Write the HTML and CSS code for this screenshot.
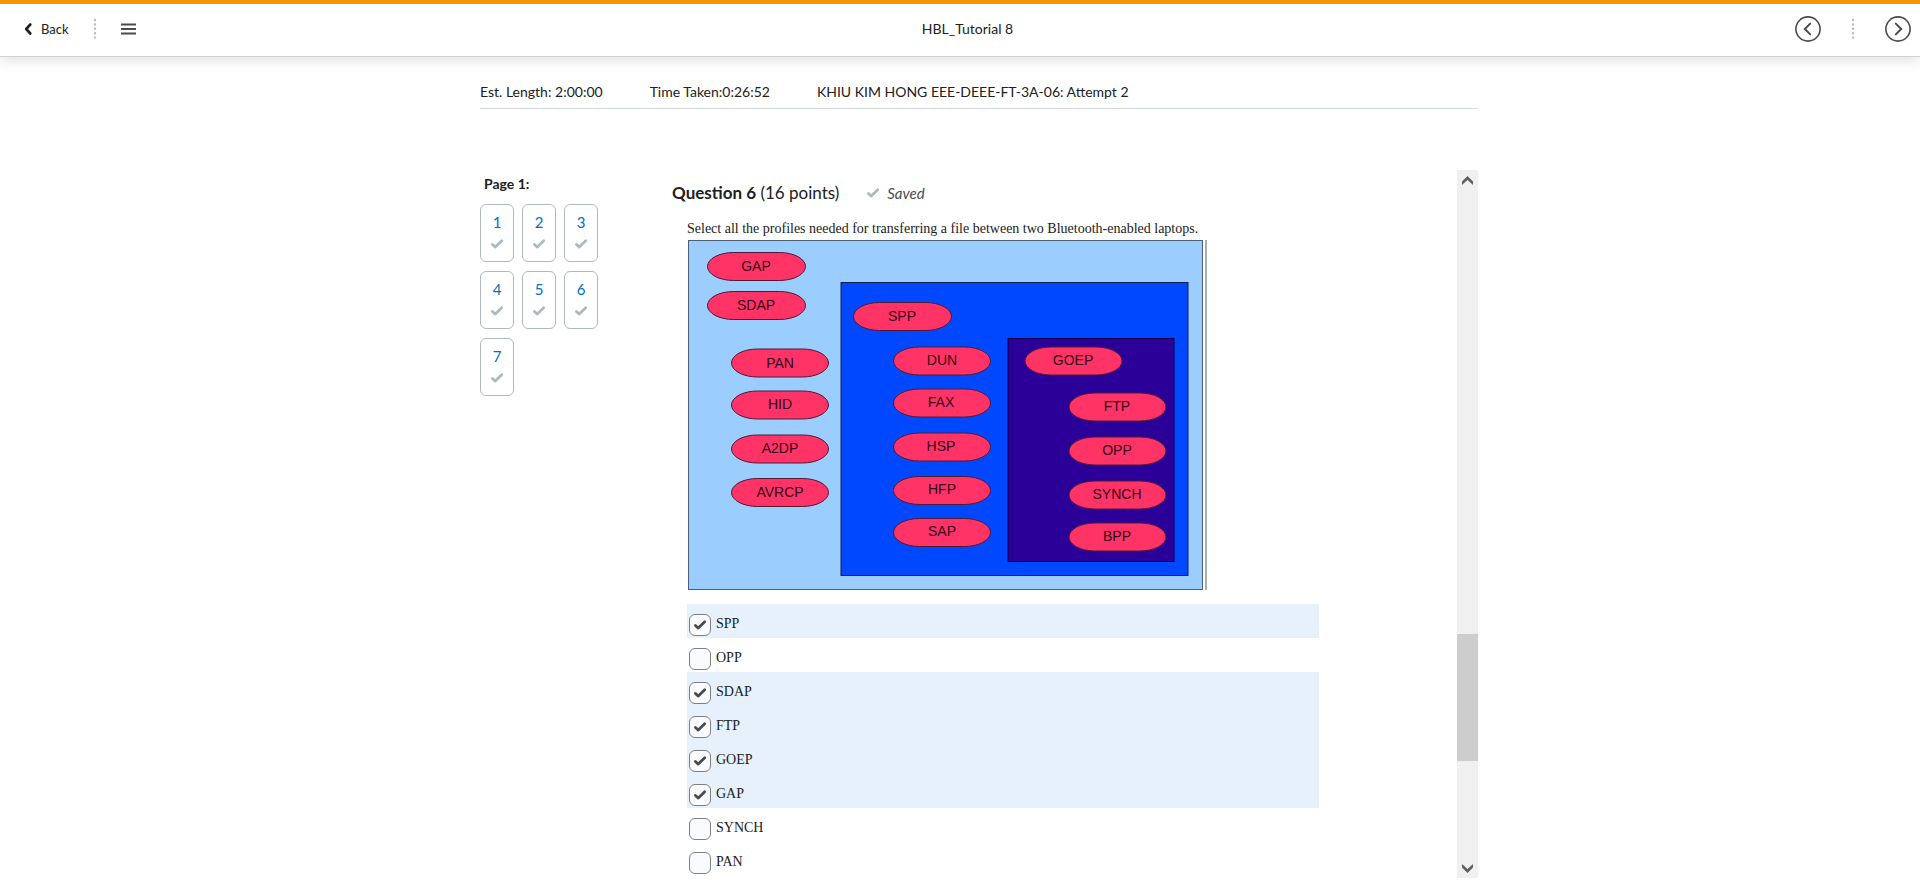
FILE: index.html
```
<!DOCTYPE html>
<html lang="en">
<head>
<meta charset="utf-8">
<title>HBL_Tutorial 8</title>
<link rel="stylesheet" href="styles.css">
</head>
<body>
<svg class="defs" aria-hidden="true">
  <symbol id="check" viewBox="0 0 14 12"><path d="M2.4 6.5 5.3 9.1 11.7 2.8" fill="none" stroke="currentColor" stroke-width="2.8" stroke-linecap="round" stroke-linejoin="round"/></symbol>
  <symbol id="dots" viewBox="0 0 4 22"><path d="M2 2v18" fill="none" stroke="#b4bcc3" stroke-width="2.4" stroke-linecap="round" stroke-dasharray="0 4.4"/></symbol>
</svg>

<header class="topbar">
  <div class="tools">
    <button class="back" type="button">
      <svg width="8" height="12" viewBox="0 0 8 12"><path d="M6.3 1.500 2.200 6l4.100 4.500" fill="none" stroke="currentColor" stroke-width="2.6" stroke-linecap="round" stroke-linejoin="round"/></svg>
      Back
    </button>
    <svg class="dots" width="4" height="22"><use href="#dots"/></svg>
    <button class="menu" type="button" aria-label="Menu">
      <svg width="16" height="12" viewBox="0 0 16 12"><path d="M0 1.500h15M0 6h15M0 10.500h15" stroke="#494c4e" stroke-width="1.8"/></svg>
    </button>
  </div>
  <h1 class="title">HBL_Tutorial 8</h1>
  <div class="pager">
    <button type="button" aria-label="Previous">
      <svg width="26" height="26" viewBox="0 0 26 26" fill="none" stroke="#494c4e" stroke-width="1.6"><circle cx="13" cy="13" r="12.1"/><path d="M15.2 7.600 9.800 13l5.400 5.400" stroke-width="2" stroke-linecap="round"/></svg>
    </button>
    <svg class="dots" width="4" height="22"><use href="#dots"/></svg>
    <button type="button" aria-label="Next">
      <svg width="26" height="26" viewBox="0 0 26 26" fill="none" stroke="#494c4e" stroke-width="1.6"><circle cx="13" cy="13" r="12.1"/><path d="m10.8 7.600 5.400 5.400-5.400 5.400" stroke-width="2" stroke-linecap="round"/></svg>
    </button>
  </div>
</header>

<main class="page">
  <div class="info">
    <span>Est. Length: 2:00:00</span>
    <span>Time Taken:0:26:52</span>
    <span>KHIU KIM HONG EEE-DEEE-FT-3A-06: Attempt 2</span>
  </div>

  <div class="quiz">
    <nav class="questions">
      <h2>Page 1:</h2>
      <div class="tiles">
        <a class="tile" href="#q1">1<svg width="14" height="12"><use href="#check"/></svg></a>
        <a class="tile" href="#q2">2<svg width="14" height="12"><use href="#check"/></svg></a>
        <a class="tile" href="#q3">3<svg width="14" height="12"><use href="#check"/></svg></a>
        <a class="tile" href="#q4">4<svg width="14" height="12"><use href="#check"/></svg></a>
        <a class="tile" href="#q5">5<svg width="14" height="12"><use href="#check"/></svg></a>
        <a class="tile" href="#q6">6<svg width="14" height="12"><use href="#check"/></svg></a>
        <a class="tile" href="#q7">7<svg width="14" height="12"><use href="#check"/></svg></a>
      </div>
    </nav>

    <section class="question" id="q6">
      <div class="heading">
        <h2><b>Question 6</b> (16 points)</h2>
        <span class="saved"><svg width="14" height="12"><use href="#check"/></svg><i>Saved</i></span>
      </div>
      <div class="content">
        <p class="prompt">Select all the profiles needed for transferring a file between two Bluetooth-enabled laptops.</p>
        <svg class="diagram" width="520" height="351" viewBox="0 0 520 351" role="img" aria-label="Bluetooth profiles">
          <rect class="outer" x="1.5" y=".5" width="514" height="349"/>
          <path class="edge" d="M519 0v350"/>
          <rect class="serial" x="154" y="42.500" width="347" height="293"/>
          <rect class="object" x="321" y="98.500" width="166" height="223"/>
          <g class="pills">
            <rect x="20.500" y="12.500" width="98" height="28" rx="26" ry="14"/>
            <rect x="20.500" y="51.500" width="98" height="28" rx="26" ry="14"/>
            <rect x="44.500" y="109" width="97" height="28" rx="26" ry="14"/>
            <rect x="44.500" y="151" width="97" height="28" rx="26" ry="14"/>
            <rect x="44.500" y="195" width="97" height="28" rx="26" ry="14"/>
            <rect x="44.500" y="238.500" width="97" height="28" rx="26" ry="14"/>
            <rect x="166.500" y="62.500" width="98" height="28" rx="26" ry="14"/>
            <rect x="206.500" y="107" width="97" height="28" rx="26" ry="14"/>
            <rect x="206.500" y="149" width="97" height="28" rx="26" ry="14"/>
            <rect x="206.500" y="193" width="97" height="28" rx="26" ry="14"/>
            <rect x="206.500" y="236.500" width="97" height="28" rx="26" ry="14"/>
            <rect x="206.500" y="278.500" width="97" height="28" rx="26" ry="14"/>
            <rect x="338" y="107" width="97" height="28" rx="26" ry="14"/>
            <rect x="382" y="153" width="97" height="28" rx="26" ry="14"/>
            <rect x="382" y="197" width="97" height="28" rx="26" ry="14"/>
            <rect x="382" y="241" width="97" height="28" rx="26" ry="14"/>
            <rect x="382" y="283" width="97" height="28" rx="26" ry="14"/>
          </g>
          <g class="names">
            <text x="69" y="31">GAP</text>
            <text x="69" y="70">SDAP</text>
            <text x="93" y="128">PAN</text>
            <text x="93" y="169">HID</text>
            <text x="93" y="213">A2DP</text>
            <text x="93" y="257">AVRCP</text>
            <text x="215" y="81">SPP</text>
            <text x="255" y="125">DUN</text>
            <text x="254" y="167">FAX</text>
            <text x="254" y="211">HSP</text>
            <text x="255" y="254">HFP</text>
            <text x="255" y="296">SAP</text>
            <text x="386" y="125">GOEP</text>
            <text x="430" y="171">FTP</text>
            <text x="430" y="215">OPP</text>
            <text x="430" y="259">SYNCH</text>
            <text x="430" y="301">BPP</text>
          </g>
        </svg>
        <div class="options">
          <label class="option"><input type="checkbox" checked><svg width="14" height="12"><use href="#check"/></svg><span>SPP</span></label>
          <label class="option"><input type="checkbox"><svg width="14" height="12"><use href="#check"/></svg><span>OPP</span></label>
          <label class="option"><input type="checkbox" checked><svg width="14" height="12"><use href="#check"/></svg><span>SDAP</span></label>
          <label class="option"><input type="checkbox" checked><svg width="14" height="12"><use href="#check"/></svg><span>FTP</span></label>
          <label class="option"><input type="checkbox" checked><svg width="14" height="12"><use href="#check"/></svg><span>GOEP</span></label>
          <label class="option"><input type="checkbox" checked><svg width="14" height="12"><use href="#check"/></svg><span>GAP</span></label>
          <label class="option"><input type="checkbox"><svg width="14" height="12"><use href="#check"/></svg><span>SYNCH</span></label>
          <label class="option"><input type="checkbox"><svg width="14" height="12"><use href="#check"/></svg><span>PAN</span></label>
        </div>
      </div>
    </section>

    <div class="scrollbar">
      <button type="button" aria-label="Scroll up"><svg width="11" height="9" viewBox="0 0 11 9"><path d="M0 5.500 5.500 0 11 5.500V9L5.500 4 0 9z" fill="#606060"/></svg></button>
      <div class="track"><div class="thumb"></div></div>
      <button type="button" aria-label="Scroll down"><svg width="11" height="9" viewBox="0 0 11 9"><path d="M0 3.500 5.500 9 11 3.500V0L5.500 5 0 0z" fill="#606060"/></svg></button>
    </div>
  </div>
</main>
</body>
</html>
```
FILE: styles.css
```
* { box-sizing: border-box; }

body {
  margin: 0;
  min-height: 100vh;
  display: flex;
  flex-direction: column;
  background: #fff;
  color: #202122;
  font: 14px/20px Lato, sans-serif;
}

h1, h2, p { margin: 0; font-weight: 400; }

button {
  display: flex;
  align-items: center;
  padding: 0;
  border: 0;
  background: none;
  color: inherit;
  font: inherit;
}

.defs { position: absolute; width: 0; height: 0; }

.topbar {
  display: grid;
  grid-template-columns: 1fr auto 1fr;
  align-items: center;
  height: 57px;
  padding: 0 9px 3px 24px;
  border-top: 4px solid #f59300;
  border-bottom: 1px solid #d3d3d3;
  box-shadow: 0 3px 12px rgba(0, 0, 0, .13);
}

.tools, .pager { display: flex; align-items: center; }
.back { gap: 9px; font-size: 13px; }
.dots { margin: 0 24px; }
.title { font-size: 14px; }
.pager { justify-content: flex-end; }
.pager .dots { margin: 0 30px; }

.page {
  flex: 1;
  display: flex;
  flex-direction: column;
  padding: 25px 23% 10px 25%;
}

.info {
  display: flex;
  gap: 47px;
  padding-bottom: 6px;
  border-bottom: 1px solid #d3d9e3;
}

.quiz {
  flex: 1;
  display: flex;
  margin-top: 61px;
}

.questions { width: 192px; flex: none; padding-top: 4px; }
.questions h2 { padding-left: 4px; font-size: 14px; font-weight: 700; }

.tiles {
  display: grid;
  grid-template-columns: repeat(3, 34px);
  gap: 9px 8px;
  margin-top: 10px;
}

.tile {
  display: flex;
  flex-direction: column;
  align-items: center;
  gap: 6px;
  height: 58px;
  padding-top: 7px;
  border: 1px solid #b1b9be;
  border-radius: 6px;
  color: #006fbf;
  font-size: 15px;
  text-decoration: none;
}

.tile svg, .saved svg { color: #b1b9be; }

.question { flex: 1; padding-top: 12px; }
.heading { display: flex; align-items: center; gap: 27px; line-height: 22px; }
.heading h2 { font-size: 17px; line-height: 22px; }
.saved { display: flex; align-items: center; gap: 7px; color: #494c4e; font-size: 15px; }

.content {
  padding-left: 15px;
  font-family: "Liberation Serif", serif;
}

.prompt { margin-top: 15px; line-height: 20px; }
.diagram { display: block; margin-top: 1px; }
.outer { fill: #9ccdff; stroke: #4a6076; }
.edge { stroke: #4a6076; }
.serial { fill: #0048ff; stroke: #0a2050; }
.object { fill: #2a0099; stroke: #14004a; }
.pills { fill: #ff3366; stroke: #4d1a38; }
.names {
  fill: #33081a;
  font-family: "Liberation Sans", sans-serif;
  text-anchor: middle;
}

.options { margin-top: 13px; margin-right: 138px; }

.option {
  display: flex;
  align-items: center;
  height: 34px;
  padding-left: 2px;
}

.option:has(:checked) { background: #e6f1fc; }

.option input {
  appearance: none;
  width: 22px;
  height: 22px;
  margin: 8px 5px 0 0;
  border: 1px solid #7c8083;
  border-radius: 6px;
  background: #fafbff;
}

.option svg {
  margin: 8px 9px 0 -23px;
  color: #494c4e;
  visibility: hidden;
}

.option span { padding-top: 5px; }

.option :checked + svg { visibility: visible; }

.scrollbar {
  display: flex;
  flex-direction: column;
  width: 21px;
  background: #f0f0f0;
}

.scrollbar button { height: 20px; justify-content: center; }
.track { display: grid; flex: 1; grid-template-rows: 444fr 127fr 97fr; }
.thumb { grid-row: 2; background: #cdcdcd; }
```
